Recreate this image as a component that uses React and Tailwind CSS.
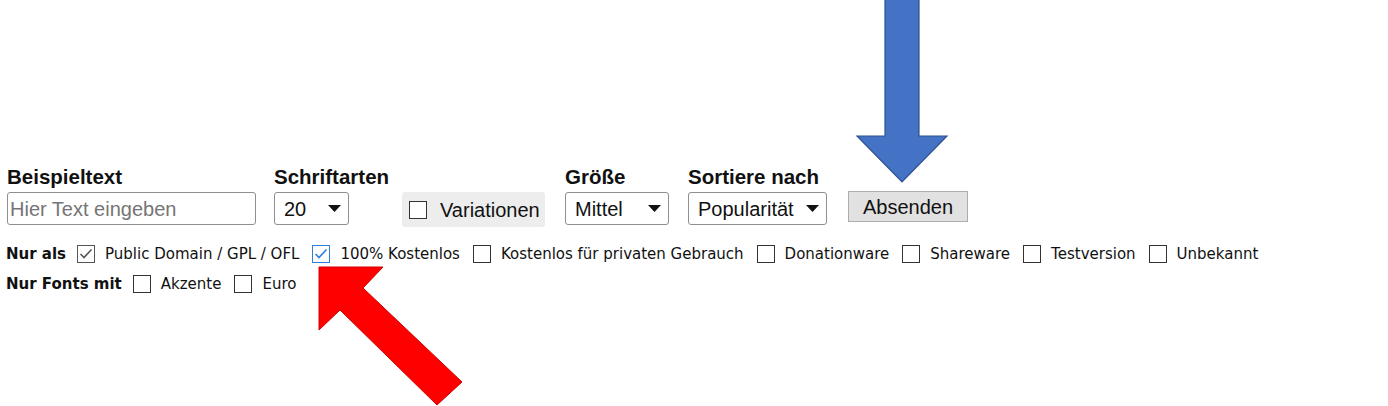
import React from "react";

const arial = { fontFamily: '"Liberation Sans", Arial, sans-serif' };
const tahoma = { fontFamily: '"DejaVu Sans", Verdana, sans-serif' };

function Caret() {
  return (
    <svg width="13" height="7" viewBox="0 0 13 7" className="shrink-0">
      <path d="M0 0 H13 L6.5 7 Z" fill="#111" />
    </svg>
  );
}

function Select({ value }) {
  return (
    <div className="h-[33px] w-full border border-[#8f8f8f] rounded-[3px] bg-white flex items-center justify-between pl-[9px] pr-[7px] text-[20px] text-[#111]">
      <span>{value}</span>
      <Caret />
    </div>
  );
}

function Box({ checked, focus }) {
  const border = focus ? "border-[#2f7fd6]" : checked ? "border-[#555]" : "border-[#333]";
  const stroke = focus ? "#2f7fd6" : "#555";
  return (
    <span className={`w-[18px] h-[18px] border ${border} bg-white flex items-center justify-center shrink-0`}>
      {checked && (
        <svg width="14" height="12" viewBox="0 0 14 12">
          <path d="M1.5 6 L5 9.5 L12.5 1.5" fill="none" stroke={stroke} strokeWidth="1.6" />
        </svg>
      )}
    </span>
  );
}

function Opt({ label, checked, focus }) {
  return (
    <div className="flex items-center">
      <Box checked={checked} focus={focus} />
      <span className="ml-[10px] mr-[13px] whitespace-nowrap">{label}</span>
    </div>
  );
}

function Field({ label, children, className }) {
  return (
    <div className={`flex flex-col shrink-0 ${className}`}>
      <div className="font-bold text-[20.5px] leading-[24px] text-[#111] mb-[3px] whitespace-nowrap">{label}</div>
      {children}
    </div>
  );
}

export default function App() {
  return (
    <div className="relative w-[1388px] h-[406px] bg-white overflow-hidden" style={arial}>
      <div className="pt-[165px] pl-[7px]">
        <div className="flex items-end">
          <Field label="Beispieltext" className="w-[249px]">
            <div className="w-full h-[33px] border border-[#8f8f8f] rounded-[3px] flex items-center pl-[2px] text-[20px] text-[#757575]">
              Hier Text eingeben
            </div>
          </Field>
          <Field label="Schriftarten" className="ml-[18px] w-[75px]">
            <Select value="20" />
          </Field>
          <div className="ml-[53px] w-[143px] h-[35px] rounded-[3px] bg-[#ededed] flex items-center pl-[7px] text-[20px] text-[#111] mb-[-2px] shrink-0">
            <Box />
            <span className="ml-[13px]">Variationen</span>
          </div>
          <Field label="Größe" className="ml-[20px] w-[104px]">
            <Select value="Mittel" />
          </Field>
          <Field label="Sortiere nach" className="ml-[19px] w-[139px]">
            <Select value="Popularität" />
          </Field>
          <div className="ml-[21px] mb-[3px] w-[120px] h-[31px] bg-[#e1e1e1] border border-[#adadad] flex items-center justify-center text-[20px] text-[#111] shrink-0">
            Absenden
          </div>
        </div>

        <div className="text-[15px] text-[#111] mt-[14px]" style={tahoma}>
          <div className="flex items-center h-[30px] ml-[-1px]">
            <span className="font-bold mr-[11px]">Nur als</span>
            <Opt label="Public Domain / GPL / OFL" checked />
            <Opt label="100% Kostenlos" checked focus />
            <Opt label="Kostenlos für privaten Gebrauch" />
            <Opt label="Donationware" />
            <Opt label="Shareware" />
            <Opt label="Testversion" />
            <Opt label="Unbekannt" />
          </div>
          <div className="flex items-center h-[30px] ml-[-1px]">
            <span className="font-bold mr-[11px]">Nur Fonts mit</span>
            <Opt label="Akzente" />
            <Opt label="Euro" />
          </div>
        </div>
      </div>

      <svg className="absolute inset-0 pointer-events-none" width="1388" height="406" viewBox="0 0 1388 406">
        <path
          d="M885 -2 H919 V136 H947 L902 182 L857 136 H885 Z"
          fill="#4472c4"
          stroke="#2f528f"
          strokeWidth="1.2"
        />
        <path
          d="M319 267 L383 267 L363 288 L462 382 L437 405 L340 310 L319 330 Z"
          fill="#ff0000"
          stroke="#d00000"
          strokeWidth="1"
        />
      </svg>
    </div>
  );
}
